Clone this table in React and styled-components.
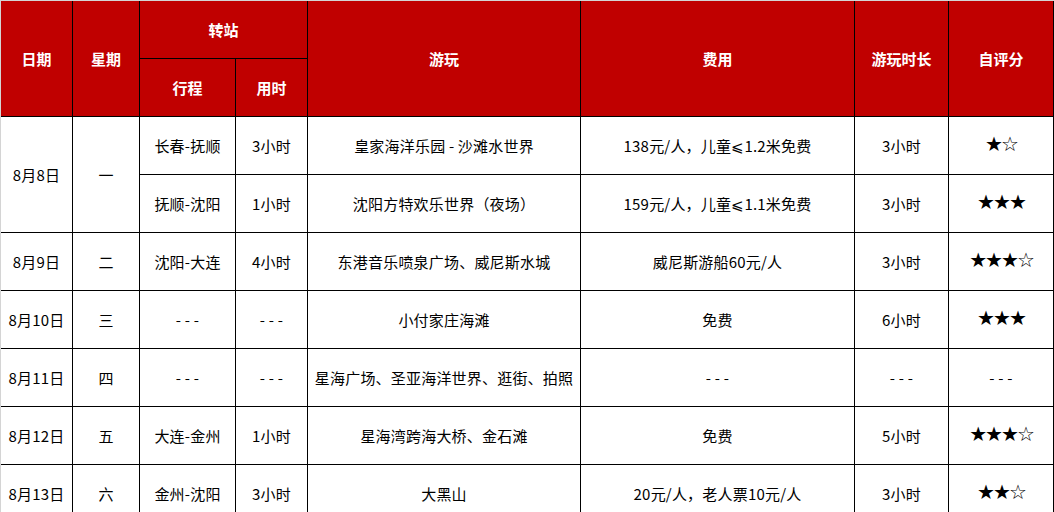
import React from "react";
import styled, { createGlobalStyle } from "styled-components";

const GlobalStyle = createGlobalStyle`
  html, body {
    margin: 0;
    padding: 0;
    overflow: hidden;
    background: #fff;
  }
  body {
    font-family: "Noto Sans CJK SC", "DejaVu Sans", sans-serif;
  }
`;

const widths = [72, 67, 96, 72, 273, 274, 94, 105];

const rows = [
  {
    date: "8月8日",
    week: "一",
    span: 2,
    legs: [
      ["长春-抚顺", "3小时", "皇家海洋乐园 - 沙滩水世界", "138元/人，儿童⩽1.2米免费", "3小时", "★☆"],
      ["抚顺-沈阳", "1小时", "沈阳方特欢乐世界（夜场）", "159元/人，儿童⩽1.1米免费", "3小时", "★★★"],
    ],
  },
  {
    date: "8月9日",
    week: "二",
    legs: [["沈阳-大连", "4小时", "东港音乐喷泉广场、威尼斯水城", "威尼斯游船60元/人", "3小时", "★★★☆"]],
  },
  {
    date: "8月10日",
    week: "三",
    legs: [["- - -", "- - -", "小付家庄海滩", "免费", "6小时", "★★★"]],
  },
  {
    date: "8月11日",
    week: "四",
    legs: [["- - -", "- - -", "星海广场、圣亚海洋世界、逛街、拍照", "- - -", "- - -", "- - -"]],
  },
  {
    date: "8月12日",
    week: "五",
    legs: [["大连-金州", "1小时", "星海湾跨海大桥、金石滩", "免费", "5小时", "★★★☆"]],
  },
  {
    date: "8月13日",
    week: "六",
    legs: [["金州-沈阳", "3小时", "大黑山", "20元/人，老人票10元/人", "3小时", "★★☆"]],
  },
];

function App() {
  return (
    <>
      <GlobalStyle />
      <Sheet>
        <colgroup>
          {widths.map((w, i) => (
            <col key={i} style={{ width: w }} />
          ))}
        </colgroup>
        <thead>
          <tr>
            <Th rowSpan={2}>日期</Th>
            <Th rowSpan={2}>星期</Th>
            <Th colSpan={2}>转站</Th>
            <Th rowSpan={2}>游玩</Th>
            <Th rowSpan={2}>费用</Th>
            <Th rowSpan={2}>游玩时长</Th>
            <Th rowSpan={2}>自评分</Th>
          </tr>
          <tr>
            <Th>行程</Th>
            <Th>用时</Th>
          </tr>
        </thead>
        <tbody>
          {rows.map((day) =>
            day.legs.map((leg, i) => (
              <tr key={day.date + i}>
                {i === 0 && (
                  <>
                    <Td rowSpan={day.span || 1}>{day.date}</Td>
                    <Td rowSpan={day.span || 1}>{day.week}</Td>
                  </>
                )}
                {leg.map((text, j) => (
                  <Td key={j} $stars={j === 5 && text.includes("★")}>
                    {text}
                  </Td>
                ))}
              </tr>
            ))
          )}
        </tbody>
      </Sheet>
    </>
  );
}

export default App;

const Sheet = styled.table`
  table-layout: fixed;
  width: 1054px;
  border-collapse: separate;
  border-spacing: 0;
  border-left: 1px solid #d4d4d4;
  border-top: 1px solid #d4d4d4;
`;

const Th = styled.th`
  box-sizing: border-box;
  height: 58px;
  padding: 0;
  background: #c00000;
  color: #fff;
  font-size: 15px;
  font-weight: 700;
  text-align: center;
  vertical-align: middle;
  border-right: 1px solid #000;
  border-bottom: 1px solid #000;
`;

const Td = styled.td`
  box-sizing: border-box;
  height: 58px;
  padding: ${(p) => (p.$stars ? "0 0 4px" : "0")};
  color: #000;
  font-family: ${(p) =>
    p.$stars ? '"DejaVu Sans", sans-serif' : '"Noto Sans CJK SC", sans-serif'};
  font-size: ${(p) => (p.$stars ? "20px" : "15px")};
  line-height: ${(p) => (p.$stars ? "20px" : "normal")};
  letter-spacing: ${(p) => (p.$stars ? "-2px" : "0.2px")};
  text-align: center;
  vertical-align: middle;
  white-space: nowrap;
  border-right: 1px solid #000;
  border-bottom: 1px solid #000;
`;
